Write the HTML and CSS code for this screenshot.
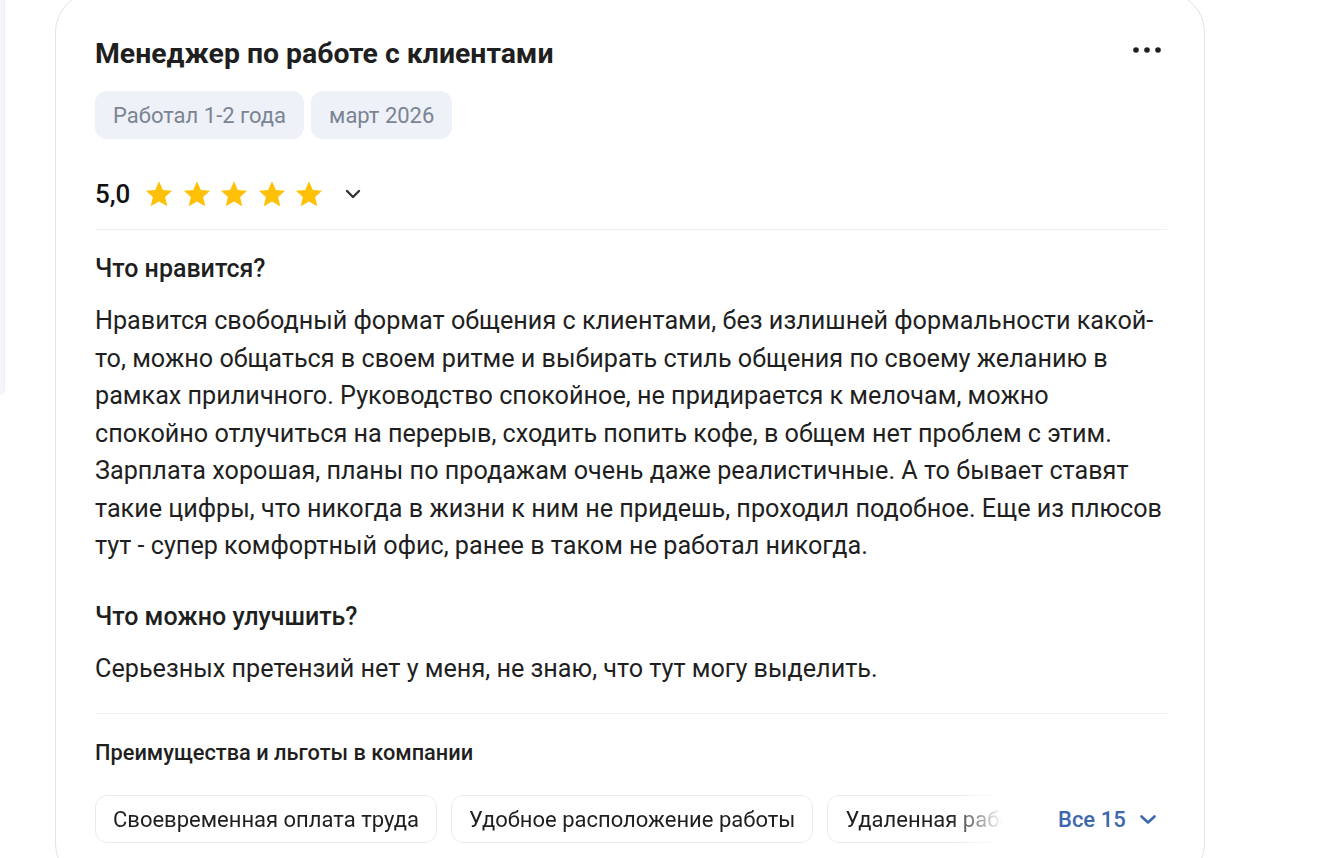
FILE: index.html
```html
<!DOCTYPE html>
<html lang="ru">
<head>
<meta charset="utf-8">
<title>Отзыв</title>
<link rel="stylesheet" href="styles.css">
</head>
<body>
<div class="page">
  <div class="side-panel"></div>
  <article class="review-card">
    <header class="review-head">
      <h2 class="review-title">Менеджер по работе с клиентами</h2>
      <button class="more-btn" aria-label="Ещё">
        <svg width="30" height="8" viewBox="0 0 30 8"><circle cx="4" cy="4" r="2.8" fill="#1f1f1f"/><circle cx="15" cy="4" r="2.8" fill="#1f1f1f"/><circle cx="26" cy="4" r="2.8" fill="#1f1f1f"/></svg>
      </button>
    </header>
    <div class="tags">
      <span class="tag">Работал 1-2 года</span>
      <span class="tag">март 2026</span>
    </div>
    <div class="rating">
      <span class="rating-value">5,0</span>
      <span class="stars">
        <svg class="star" viewBox="0 0 24 24"><path d="M12 1.8l3.1 6.9 7.4.7-5.6 5 1.7 7.4L12 17.9l-6.6 3.9 1.7-7.4-5.6-5 7.4-.7z"/></svg>
        <svg class="star" viewBox="0 0 24 24"><path d="M12 1.8l3.1 6.9 7.4.7-5.6 5 1.7 7.4L12 17.9l-6.6 3.9 1.7-7.4-5.6-5 7.4-.7z"/></svg>
        <svg class="star" viewBox="0 0 24 24"><path d="M12 1.8l3.1 6.9 7.4.7-5.6 5 1.7 7.4L12 17.9l-6.6 3.9 1.7-7.4-5.6-5 7.4-.7z"/></svg>
        <svg class="star" viewBox="0 0 24 24"><path d="M12 1.8l3.1 6.9 7.4.7-5.6 5 1.7 7.4L12 17.9l-6.6 3.9 1.7-7.4-5.6-5 7.4-.7z"/></svg>
        <svg class="star" viewBox="0 0 24 24"><path d="M12 1.8l3.1 6.9 7.4.7-5.6 5 1.7 7.4L12 17.9l-6.6 3.9 1.7-7.4-5.6-5 7.4-.7z"/></svg>
      </span>
      <svg class="chev" width="16" height="10" viewBox="0 0 16 10"><path d="M2 2l6 6 6-6" fill="none" stroke="#333" stroke-width="2.4" stroke-linecap="round" stroke-linejoin="round"/></svg>
    </div>
    <hr class="divider">
    <section class="block">
      <h3 class="block-title">Что нравится?</h3>
      <p class="block-text">Нравится свободный формат общения с клиентами, без излишней формальности какой-то, можно общаться в своем ритме и выбирать стиль общения по своему желанию в рамках приличного. Руководство спокойное, не придирается к мелочам, можно спокойно отлучиться на перерыв, сходить попить кофе, в общем нет проблем с этим. Зарплата хорошая, планы по продажам очень даже реалистичные. А то бывает ставят такие цифры, что никогда в жизни к ним не придешь, проходил подобное. Еще из плюсов тут - супер комфортный офис, ранее в таком не работал никогда.</p>
    </section>
    <section class="block block-second">
      <h3 class="block-title">Что можно улучшить?</h3>
      <p class="block-text">Серьезных претензий нет у меня, не знаю, что тут могу выделить.</p>
    </section>
    <hr class="divider divider-low">
    <h4 class="benefits-title">Преимущества и льготы в компании</h4>
    <div class="benefits">
      <div class="chips">
        <span class="chip">Своевременная оплата труда</span>
        <span class="chip">Удобное расположение работы</span>
        <span class="chip">Удаленная работа</span>
      </div>
      <button class="all-btn">Все 15
        <svg width="18" height="11" viewBox="0 0 18 11"><path d="M2.5 2.5l6.5 6 6.5-6" fill="none" stroke="#3d68ad" stroke-width="2.6" stroke-linecap="round" stroke-linejoin="round"/></svg>
      </button>
    </div>
  </article>
</div>
</body>
</html>
```
FILE: styles.css
```css
* { box-sizing: border-box; }
html, body { margin: 0; padding: 0; background: #fff; }
body {
  font-family: Roboto, "Noto Sans", "Liberation Sans", sans-serif;
  color: #1f1f1f;
  overflow: hidden;
  height: 858px;
}
.page {
  display: flex;
  align-items: flex-start;
}
.side-panel {
  width: 5px;
  height: 395px;
  background: #f4f5f9;
  border-right: 1px solid #eceef3;
  border-bottom-right-radius: 5px;
  flex: none;
}
.review-card {
  margin-left: 50px;
  margin-top: -8px;
  width: 1150px;
  border: 1px solid #dfe3ea;
  border-radius: 40px;
  padding: 45px 37px 40px 39px;
  background: #fff;
  flex: none;
}
.review-head {
  display: flex;
  justify-content: space-between;
  align-items: flex-start;
}
.review-title {
  margin: 0;
  font-size: 28.4px;
  line-height: 32px;
  font-weight: 700;
  color: #1f1f1f;
}
.more-btn {
  border: 0;
  background: none;
  padding: 0;
  margin: 8px 5px 0 0;
  line-height: 0;
}
.tags {
  display: flex;
  gap: 7px;
  margin-top: 21px;
}
.tag {
  height: 48px;
  display: inline-flex;
  align-items: center;
  padding: 0 18px;
  background: #eef1f7;
  border-radius: 12px;
  font-size: 22px;
  color: #7a8493;
}
.rating {
  display: flex;
  align-items: center;
  height: 32px;
  margin-top: 39px;
}
.rating-value {
  font-size: 26px;
  font-weight: 500;
  color: #111;
  margin-right: 14px;
}
.stars { display: flex; gap: 7.5px; }
.star { width: 30px; height: 30px; fill: #ffc107; }
.chev { margin-left: 21px; }
.divider {
  border: 0;
  border-top: 1px solid #eef0f3;
  margin: 19px 0 0;
}
.block { margin-top: 25px; }
.block-second { margin-top: 38px; }
.block-title {
  margin: 0;
  font-size: 25px;
  line-height: 28px;
  font-weight: 500;
}
.block-text {
  margin: 19px 0 0;
  font-size: 25.2px;
  line-height: 37.5px;
  color: #1f1f1f;
}
.divider-low { margin-top: 26px; }
.benefits-title {
  margin: 27px 0 0;
  font-size: 21.8px;
  line-height: 24px;
  font-weight: 500;
}
.benefits {
  display: flex;
  align-items: center;
  margin-top: 30px;
}
.chips {
  flex: none;
  width: 908px;
  display: flex;
  gap: 14px;
  overflow: hidden;
  -webkit-mask-image: linear-gradient(to right, #000 855px, transparent 908px);
  mask-image: linear-gradient(to right, #000 855px, transparent 908px);
}
.chip {
  flex: none;
  height: 48px;
  display: inline-flex;
  align-items: center;
  padding: 0 17px;
  border: 1px solid #e8eaf0;
  border-radius: 12px;
  font-size: 22px;
  color: #1f1f1f;
}
.all-btn {
  margin-left: 55px;
  border: 0;
  background: none;
  padding: 0;
  display: inline-flex;
  align-items: center;
  gap: 13px;
  font-family: inherit;
  font-size: 22px;
  font-weight: 500;
  color: #3d68ad;
}
```
